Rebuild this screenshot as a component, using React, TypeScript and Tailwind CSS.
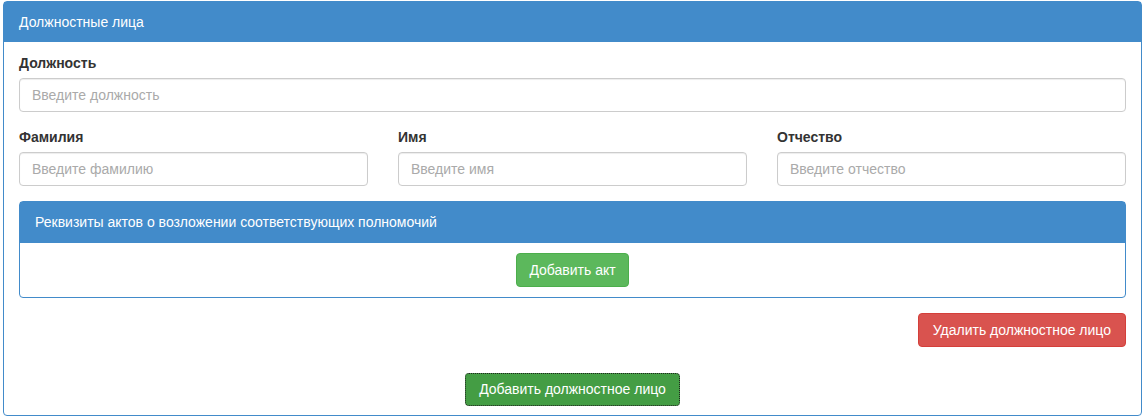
import React from 'react'

const Field = ({ label, placeholder }: { label: string; placeholder: string }) => (
  <div className="flex flex-col">
    <label className="font-bold text-[14px] leading-[20px] text-[#333] mb-[5px]">{label}</label>
    <input
      placeholder={placeholder}
      className="h-[34px] w-full rounded-[4px] border border-[#ccc] px-3 text-[14px] text-[#555] placeholder:text-[#aaa] shadow-[inset_0_1px_1px_rgba(0,0,0,0.075)] outline-none"
    />
  </div>
)

const App = () => {
  return (
    <div className="pt-[1px] pl-[3px] font-['Liberation_Sans',Arial,sans-serif] text-[14px] text-[#333]">
      <div className="w-[1139px] rounded-[4px] border border-[#428bca] bg-white">
        <div className="h-[40px] bg-[#428bca] px-[15px] pt-[10px] leading-[20px] text-white">
          Должностные лица
        </div>
        <div className="px-[15px] pt-[11px] pb-[9px]">
          <Field label="Должность" placeholder="Введите должность" />
          <div className="mt-[15px] grid grid-cols-3 gap-[30px]">
            <Field label="Фамилия" placeholder="Введите фамилию" />
            <Field label="Имя" placeholder="Введите имя" />
            <Field label="Отчество" placeholder="Введите отчество" />
          </div>
          <div className="mt-[15px] rounded-[4px] border border-[#428bca]">
            <div className="h-[41px] bg-[#428bca] px-[15px] pt-[10px] leading-[20px] text-white">
              Реквизиты актов о возложении соответствующих полномочий
            </div>
            <div className="flex justify-center pt-[10px] pb-[10px]">
              <button className="h-[34px] rounded-[4px] border border-[#4cae4c] bg-[#5cb85c] px-[12px] text-white">
                Добавить акт
              </button>
            </div>
          </div>
          <div className="mt-[15px] flex justify-end">
            <button className="h-[34px] rounded-[4px] border border-[#d43f3a] bg-[#d9534f] px-[14px] text-white">
              Удалить должностное лицо
            </button>
          </div>
          <div className="mt-[26px] flex justify-center">
            <button className="h-[33px] rounded-[4px] border border-dotted border-[#222] bg-[#449d44] px-[13px] text-white">
              Добавить должностное лицо
            </button>
          </div>
        </div>
      </div>
    </div>
  )
}

export default App
